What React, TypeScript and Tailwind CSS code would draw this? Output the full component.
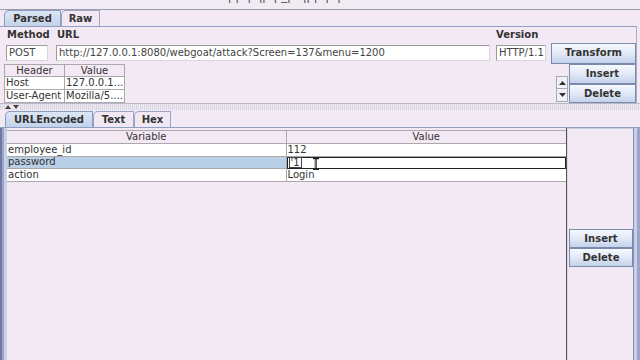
import React from 'react';

function Tab({ label, selected, w }: { label: string; selected?: boolean; w: string }) {
  return (
    <div
      className={`${w} h-[16px] flex items-center justify-center font-bold text-[10px] border border-b-0 rounded-tl-[5px] ${
        selected
          ? 'bg-gradient-to-b from-[#dbe5f4] to-[#c4d3ea] border-[#8a9cc0] text-[#333]'
          : 'bg-[#f1e8f3] border-[#9aa6c2] text-[#333]'
      }`}
    >
      {label}
    </div>
  );
}

function Btn({ label, w, h }: { label: string; w: string; h: string }) {
  return (
    <button
      className={`${w} ${h} flex items-center justify-center font-bold text-[10px] text-[#333] border border-[#7b8bad] bg-gradient-to-b from-[#f6f8fd] via-[#e2e9f6] to-[#c3d1ea]`}
    >
      {label}
    </button>
  );
}

function Input({ value, w }: { value: string; w: string }) {
  return (
    <div className={`${w} h-[16px] bg-white border border-[#9a9a9a] border-r-[#d8d8d8] border-b-[#d8d8d8] flex items-center px-[2px] text-[#444] whitespace-nowrap overflow-hidden`}>
      {value}
    </div>
  );
}

export default function App() {
  const params = [
    { k: 'employee_id', v: '112' },
    { k: 'password', v: "'1", sel: true },
    { k: 'action', v: 'Login' },
  ];

  return (
    <div className="w-[640px] h-[360px] bg-[#f3e9f5] overflow-hidden flex flex-col font-['DejaVu_Sans',sans-serif] text-[10px] text-[#333] leading-none">
      {/* title row, scrolled mostly out of view */}
      <div className="h-[10px] shrink-0 overflow-hidden border-b border-[#9d9db0] bg-[#f1ebf4]">
        <div className="-mt-[11px] pl-[228px] text-[12px] leading-[14px] text-[#555] whitespace-nowrap">
          ppq qp p_p qpp pq
        </div>
      </div>

      {/* top tabs */}
      <div className="h-[16px] shrink-0 flex items-end pl-[4px]">
        <Tab label="Parsed" selected w="w-[57px]" />
        <Tab label="Raw" w="w-[39px]" />
      </div>

      {/* parsed panel */}
      <div className="shrink-0 border-t border-[#8fa0c4] border-r border-r-[#a6b0cc] mr-[3px] h-[77px] flex flex-col">
        <div className="h-[15px] flex items-end font-bold pb-[2px]">
          <span className="ml-[7px] w-[50px]">Method</span>
          <span className="w-[439px]">URL</span>
          <span>Version</span>
        </div>
        <div className="h-[22px] flex items-center pl-[6px]">
          <Input value="POST" w="w-[42px]" />
          <div className="w-[8px]" />
          <Input value="http://127.0.0.1:8080/webgoat/attack?Screen=137&menu=1200" w="w-[434px]" />
          <div className="w-[6px]" />
          <Input value="HTTP/1.1" w="w-[50px]" />
          <div className="w-[5px]" />
          <Btn label="Transform" w="w-[85px]" h="h-[21px]" />
        </div>
        <div className="flex-1 flex">
          <div className="ml-[4px] w-[121px] self-start border-l border-t border-[#a9a9a9]">
            <div className="flex h-[12px] text-center">
              <div className="w-[60px] border-r border-b border-[#a9a9a9] flex items-center justify-center">Header</div>
              <div className="w-[60px] border-r border-b border-[#a9a9a9] flex items-center justify-center">Value</div>
            </div>
            {[
              ['Host', '127.0.0.1...'],
              ['User-Agent', 'Mozilla/5....'],
            ].map(([a, b]) => (
              <div key={a} className="flex h-[13px] bg-white">
                <div className="w-[60px] border-r border-b border-[#a9a9a9] flex items-center px-[1px] whitespace-nowrap overflow-hidden">{a}</div>
                <div className="w-[60px] border-r border-b border-[#a9a9a9] flex items-center px-[1px] whitespace-nowrap overflow-hidden">{b}</div>
              </div>
            ))}
          </div>
          <div className="flex-1" />
          <div className="w-[12px] mt-[12px] h-[26px] flex flex-col border border-[#a9a9a9] bg-[#eef1f8]">
            <div className="h-[12px] flex items-center justify-center border-b border-[#a9a9a9]">
              <svg width="7" height="4" viewBox="0 0 7 4"><path d="M0 4L3.5 0L7 4Z" fill="#333" /></svg>
            </div>
            <div className="flex-1 flex items-center justify-center">
              <svg width="7" height="4" viewBox="0 0 7 4"><path d="M0 0L3.5 4L7 0Z" fill="#333" /></svg>
            </div>
          </div>
          <div className="flex flex-col ml-[1px]">
            <Btn label="Insert" w="w-[67px]" h="h-[20px]" />
            <Btn label="Delete" w="w-[67px]" h="h-[19px]" />
          </div>
        </div>
      </div>

      {/* splitter */}
      <div className="h-[7px] shrink-0 flex items-center border-t border-[#b8b8c8] bg-[repeating-linear-gradient(90deg,#d6d6e2_0px,#d6d6e2_1px,transparent_1px,transparent_2px)]">
        <div className="ml-[5px] flex gap-[2px] bg-[#f3e9f5]">
          <svg width="6" height="4" viewBox="0 0 6 4"><path d="M0 4L3 0L6 4Z" fill="#444" /></svg>
          <svg width="6" height="4" viewBox="0 0 6 4"><path d="M0 0L3 4L6 0Z" fill="#444" /></svg>
        </div>
      </div>

      {/* lower tabs */}
      <div className="h-[17px] shrink-0 flex items-end pl-[5px]">
        <Tab label="URLEncoded" selected w="w-[88px]" />
        <Tab label="Text" w="w-[41px]" />
        <Tab label="Hex" w="w-[37px]" />
      </div>

      {/* lower panel */}
      <div className="flex-1 flex border-t border-[#8fa0c4]">
        <div className="w-[7px] flex">
          <div className="w-[2px] bg-[#6f79a0]" />
          <div className="w-[2px] bg-[#9aa5c8]" />
          <div className="w-[3px] bg-[#c7cfea]" />
        </div>
        <div className="w-[560px] border-r border-[#555] pt-[2px]">
          <div className="border-t border-[#a9a9a9]">
            <div className="flex h-[13px]">
              <div className="w-[280px] border-r border-b border-[#a9a9a9] flex items-center justify-center">Variable</div>
              <div className="w-[280px] border-b border-[#a9a9a9] flex items-center justify-center">Value</div>
            </div>
            {params.map((p) => (
              <div key={p.k} className="flex h-[12.5px] bg-white">
                <div className={`w-[280px] border-r border-b border-[#a9a9a9] flex items-center px-[1px] ${p.sel ? 'bg-[#b9cfe6]' : ''}`}>{p.k}</div>
                {p.sel ? (
                  <div className="w-[280px] border-[1.5px] border-[#222] flex items-center relative">
                    <span className="ml-[1px] px-[1px] border border-[#444] leading-[9px]">{p.v}</span>
                    <svg className="absolute left-[25px] top-[0px]" width="6" height="12" viewBox="0 0 6 12">
                      <path d="M0 0.5H6M3 0.5V11.5M0 11.5H6" stroke="#222" strokeWidth="1.4" fill="none" />
                      <path d="M2 2V10" stroke="#888" strokeWidth="1" />
                    </svg>
                  </div>
                ) : (
                  <div className="w-[280px] border-b border-[#a9a9a9] flex items-center px-[1px]">{p.v}</div>
                )}
              </div>
            ))}
          </div>
        </div>
        <div className="w-[1px] bg-[#d8d8e4]" />
        <div className="w-[65px] flex flex-col pt-[100px] pl-[1px] border-t border-[#c8cfe2]">
          <Btn label="Insert" w="w-[64px]" h="h-[19px]" />
          <Btn label="Delete" w="w-[64px]" h="h-[19px]" />
        </div>
        <div className="w-[7px] flex">
          <div className="w-[1px] bg-[#8890b2]" />
          <div className="w-[3px] bg-[#c7cfea]" />
          <div className="w-[3px] bg-[#9aa5c8]" />
        </div>
      </div>
    </div>
  );
}
